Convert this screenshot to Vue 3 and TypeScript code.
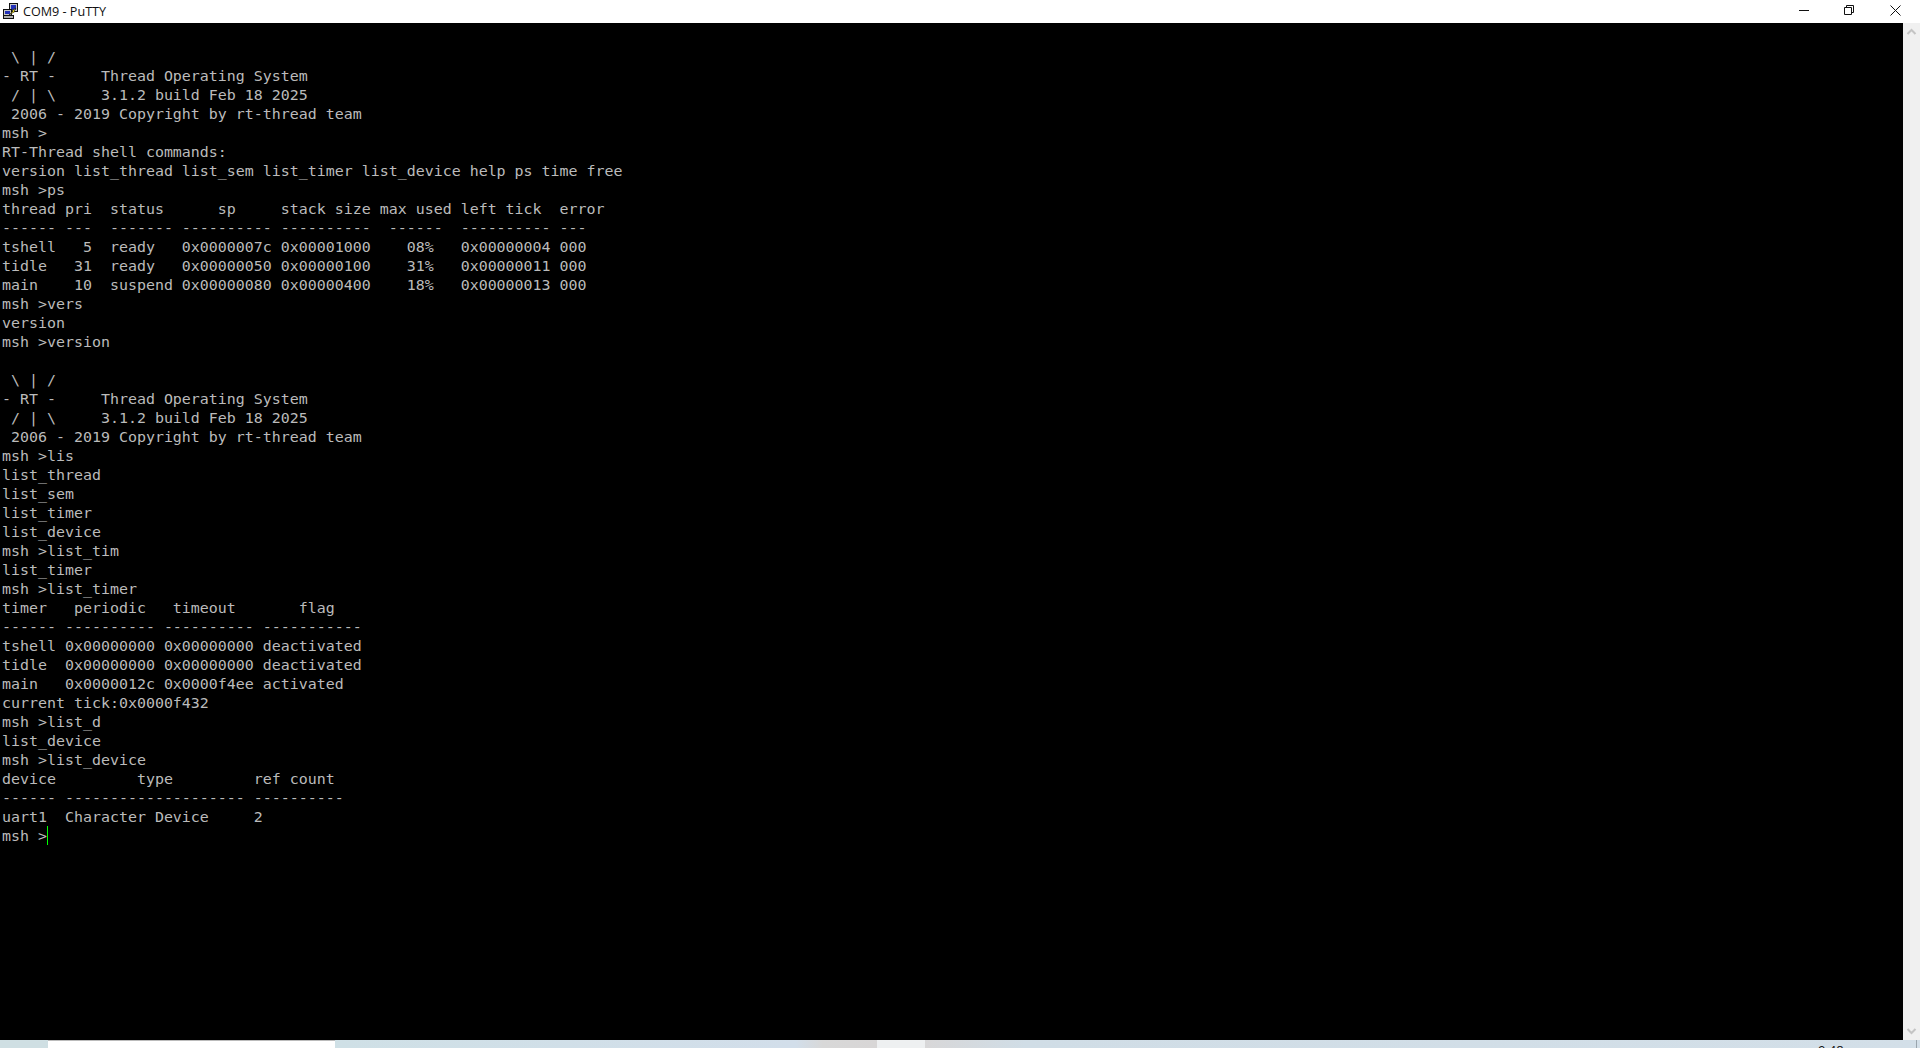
<script setup lang="ts">
const lines: string[] = [
  '',
  ' \\ | /',
  '- RT -     Thread Operating System',
  ' / | \\     3.1.2 build Feb 18 2025',
  ' 2006 - 2019 Copyright by rt-thread team',
  'msh >',
  'RT-Thread shell commands:',
  'version list_thread list_sem list_timer list_device help ps time free',
  'msh >ps',
  'thread pri  status      sp     stack size max used left tick  error',
  '------ ---  ------- ---------- ----------  ------  ---------- ---',
  'tshell   5  ready   0x0000007c 0x00001000    08%   0x00000004 000',
  'tidle   31  ready   0x00000050 0x00000100    31%   0x00000011 000',
  'main    10  suspend 0x00000080 0x00000400    18%   0x00000013 000',
  'msh >vers',
  'version',
  'msh >version',
  '',
  ' \\ | /',
  '- RT -     Thread Operating System',
  ' / | \\     3.1.2 build Feb 18 2025',
  ' 2006 - 2019 Copyright by rt-thread team',
  'msh >lis',
  'list_thread',
  'list_sem',
  'list_timer',
  'list_device',
  'msh >list_tim',
  'list_timer',
  'msh >list_timer',
  'timer   periodic   timeout       flag',
  '------ ---------- ---------- -----------',
  'tshell 0x00000000 0x00000000 deactivated',
  'tidle  0x00000000 0x00000000 deactivated',
  'main   0x0000012c 0x0000f4ee activated',
  'current tick:0x0000f432',
  'msh >list_d',
  'list_device',
  'msh >list_device',
  'device         type         ref count',
  '------ -------------------- ----------',
  'uart1  Character Device     2',
  'msh >',
]
</script>

<template>
  <div class="window">
    <header class="titlebar">
      <svg class="app-icon" width="16" height="16" viewBox="0 0 16 16">
        <rect x="6.500" y="0.500" width="8" height="8" fill="#c8c8c8" stroke="#111" />
        <rect x="8" y="2" width="5" height="5" fill="#2230b8" />
        <rect x="0.500" y="6.500" width="8" height="6" fill="#c8c8c8" stroke="#111" />
        <rect x="2" y="8" width="5" height="3" fill="#2230b8" />
        <rect x="0.500" y="12.500" width="10" height="3" fill="#b0b0b0" stroke="#111" />
        <path d="M6 12 L10 8 L9 7.500 L13 5 L11 8 L12 8.500 Z" fill="#f2e21c" stroke="#111" stroke-width="0.6" />
      </svg>
      <span class="title">COM9 - PuTTY</span>
      <div class="controls">
        <button class="ctl"><svg width="11" height="11" viewBox="0 0 11 11"><path d="M0 5.500H10" stroke="#111" fill="none" /></svg></button>
        <button class="ctl"><svg width="11" height="11" viewBox="0 0 11 11"><path d="M.5 2.500h7v7h-7zM2.500 2.500V.5h7v7H7.500" stroke="#111" fill="none" /></svg></button>
        <button class="ctl"><svg width="11" height="11" viewBox="0 0 11 11"><path d="M.5 .5L10.500 10.500M10.500 .5L.5 10.500" stroke="#111" fill="none" /></svg></button>
      </div>
    </header>
    <main class="body">
      <div class="terminal">
        <div v-for="(line, i) in lines" :key="i" class="row">{{ line }}<span v-if="i === lines.length - 1" class="cursor"></span></div>
      </div>
      <aside class="scrollbar">
        <svg width="17" height="17" viewBox="0 0 17 17"><path d="M4.500 11L8.500 7L12.500 11" stroke="#c4c4c4" stroke-width="2" fill="none" /></svg>
        <svg width="17" height="17" viewBox="0 0 17 17"><path d="M4.500 6L8.500 10L12.500 6" stroke="#c4c4c4" stroke-width="2" fill="none" /></svg>
      </aside>
    </main>
    <footer class="taskbar">
      <div class="task-a"></div>
      <div class="task-b"></div>
      <div class="task-c"></div>
      <div class="task-d"></div>
      <div class="task-e"><span class="clock">9:48</span><i class="edge"></i></div>
    </footer>
  </div>
</template>

<style>
html, body { margin: 0; background: #000; overflow: hidden; }
</style>

<style scoped>
.window { width: 1920px; height: 1048px; display: flex; flex-direction: column; overflow: hidden; }
.titlebar { height: 23px; flex: none; background: #fff; display: flex; align-items: center; }
.app-icon { margin-left: 3px; margin-bottom: 1px; }
.title { margin-left: 4px; font: 12.6px "Open Sans", "Liberation Sans", sans-serif; color: #111; }
.controls { margin-left: auto; display: flex; height: 100%; padding-right: 2px; }
.ctl { width: 45.500px; border: 0; background: none; padding: 0 0 3px; display: flex; align-items: center; justify-content: center; }
.body { flex: 1; min-height: 0; display: flex; background: #000; }
.terminal { flex: 1; padding: 5px 0 0 2px; font: 14.95px/21px "DejaVu Sans Mono", monospace; color: #bbb; white-space: pre; }
.row { height: 19px; }
.cursor { display: inline-block; width: 1px; height: 19px; background: #0f0; vertical-align: top; }
.scrollbar { width: 17px; background: #f0f0f0; display: flex; flex-direction: column; justify-content: space-between; }
.taskbar { height: 8px; flex: none; display: flex; overflow: hidden; }
.task-a { width: 48px; background: #cfdfe3; }
.task-b { width: 287px; background: #fff; box-shadow: inset 0 1px 0 #bbb; }
.task-c { width: 542px; background: linear-gradient(90deg, #cfe0e6 0, #d2deea 85%, #d8d8d8 90%, #d8d6d6 100%); }
.task-d { width: 48px; background: #eef0f1; }
.task-e { flex: 1; background: linear-gradient(90deg, #d8d7d8, #d0dde6 10%, #d3dfe8 100%); position: relative; }
.clock { position: absolute; left: 893px; top: 3px; font: 13px/14px "Open Sans", sans-serif; color: #111; }
.edge { position: absolute; right: 3px; top: 0; width: 1px; height: 8px; background: #9aa5ad; }
</style>
